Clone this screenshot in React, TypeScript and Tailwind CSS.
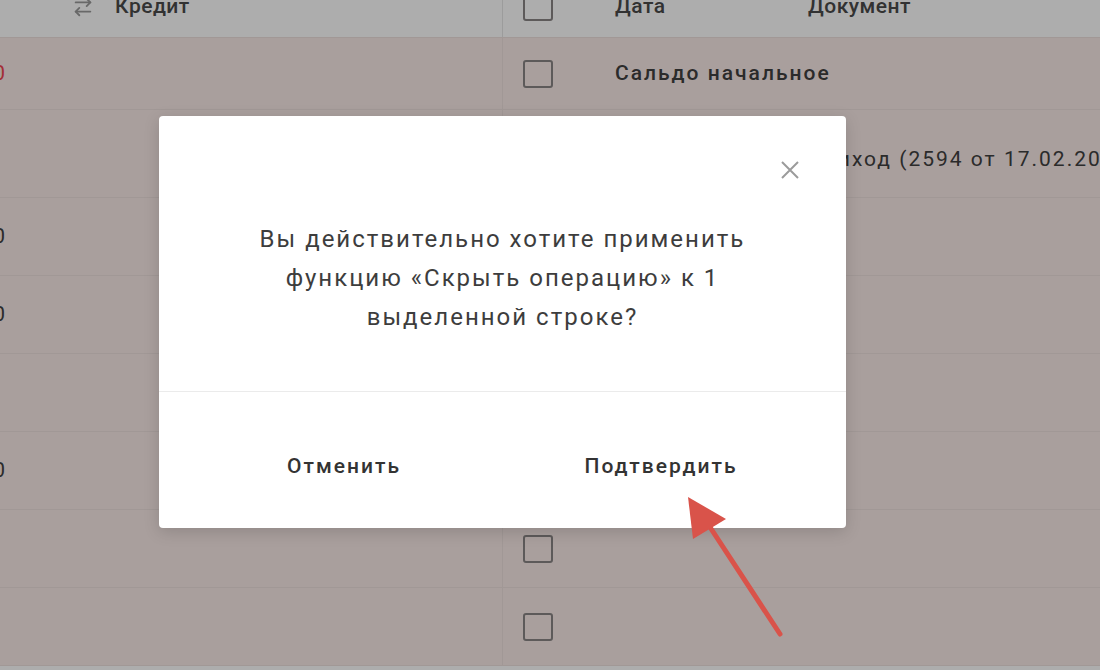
import { ArrowRightLeft } from "lucide-react";

const font = { fontFamily: "Roboto, 'Noto Sans', sans-serif" };

type Row = { h: string; left?: string; leftRed?: boolean; check?: boolean; date?: string; doc?: string };

const rows: Row[] = [
  { h: "h-[72px]", left: "0,00", leftRed: true, check: true, date: "Сальдо начальное" },
  { h: "h-[88px]", check: true, doc: "Приход (2594 от 17.02.2022)" },
  { h: "h-[78px]", left: "12 400,00", check: true },
  { h: "h-[78px]", left: "3 150,00", check: true },
  { h: "h-[78px]", check: true },
  { h: "h-[78px]", left: "8 900,00", check: true },
  { h: "h-[78px]", check: true },
  { h: "h-[78px]", check: true },
];

function Checkbox() {
  return <div className="w-[30px] h-[28px] rounded-[3px] border-2 border-[#8a8585] shrink-0" />;
}

export default function App() {
  return (
    <div className="relative w-[1100px] h-[670px] overflow-hidden bg-white" style={font}>
      {/* Table behind the dialog */}
      <div className="-mt-[24px] flex flex-col">
        {/* Header */}
        <div className="flex h-[62px] bg-white border-b border-[#ede1de] text-[21px] font-medium text-[#4a4a4a]">
          <div className="w-[503px] shrink-0 flex items-center pl-[72px] gap-[21px] border-r border-[#e6e6e6]">
            <ArrowRightLeft size={22} className="text-[#9a9a9a]" />
            <span className="tracking-[0.5px]">Кредит</span>
          </div>
          <div className="flex-1 flex items-center pl-[20px]">
            <Checkbox />
            <span className="ml-[62px] w-[193px] tracking-[0.5px]">Дата</span>
            <span className="tracking-[0.5px]">Документ</span>
          </div>
        </div>

        {/* Rows */}
        {rows.map((r, i) => (
          <div key={i} className={`flex ${r.h} bg-[#faebe8] border-b border-[#ede1de] text-[21px] text-[#404040] tracking-[2px]`}>
            <div className="w-[503px] shrink-0 flex items-center border-r border-[#ede1de]">
              <div className="w-[7px] flex justify-end whitespace-nowrap">
                {r.left && <span className={r.leftRed ? "text-[#f04552]" : ""}>{r.left}</span>}
              </div>
            </div>
            <div className="flex-1 flex items-center pl-[20px] whitespace-nowrap">
              {r.check && <Checkbox />}
              {r.date && <span className="ml-[62px] font-medium">{r.date}</span>}
              {r.doc && <span className="ml-[254px] pt-[12px]">{r.doc}</span>}
            </div>
          </div>
        ))}
      </div>

      {/* Dim overlay */}
      <div className="absolute inset-0 bg-black/[0.32]" />

      {/* Dialog */}
      <div className="absolute left-[159px] top-[116px] w-[687px] h-[412px] bg-white rounded-[4px] shadow-[0_4px_16px_rgba(0,0,0,0.15)] flex flex-col">
        <div className="relative h-[276px] border-b border-[#ebebeb] flex items-start justify-center pt-[104px]">
          <button className="absolute right-[46px] top-[44px] w-[20px] h-[20px] flex items-center justify-center">
            <svg width="20" height="20" viewBox="0 0 20 20">
              <path d="M2 2 L18 18 M18 2 L2 18" stroke="#9b9b9b" strokeWidth="2" />
            </svg>
          </button>
          <p className="w-[520px] text-center text-[24px] leading-[39px] tracking-[2px] text-[#3d3d3d]">
            Вы действительно хотите применить функцию «Скрыть операцию» к 1 выделенной строке?
          </p>
        </div>
        <div className="flex-1 flex items-center pt-[14px] text-[21px] font-medium tracking-[2px] text-[#333333]">
          <button className="w-[370px] text-center">Отменить</button>
          <button className="w-[264px] text-center">Подтвердить</button>
        </div>
      </div>

      {/* Annotation arrow */}
      <svg className="absolute inset-0 pointer-events-none" width="1100" height="670">
        <line x1="780" y1="634" x2="706" y2="521" stroke="#d9534a" strokeWidth="5" strokeLinecap="round" />
        <polygon points="688,497 726,519 693,539" fill="#d9534a" />
      </svg>
    </div>
  );
}
